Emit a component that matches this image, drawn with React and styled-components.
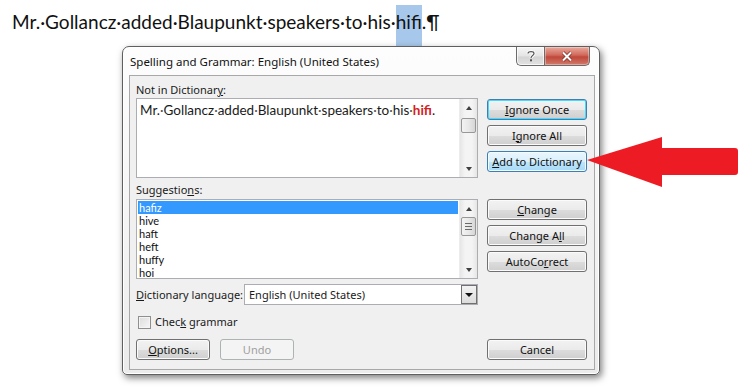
import styled, { createGlobalStyle, css } from "styled-components";

const Global = createGlobalStyle`
  body {
    margin: 0;
    background: #ffffff;
  }
`;

const uiFont = `"Noto Sans", "Open Sans", sans-serif`;
const docFont = `Lato, "Open Sans", sans-serif`;

const Stage = styled.div`
  position: relative;
  width: 749px;
  height: 389px;
  overflow: hidden;
  background: #ffffff;
`;

const DocLine = styled.div`
  height: 46px;
  padding-left: 12px;
  font-family: ${docFont};
  font-size: 19px;
  line-height: 44px;
  color: #111;
  white-space: nowrap;
`;

const Sel = styled.span`
  display: inline-block;
  vertical-align: top;
  margin-top: 5px;
  height: 41px;
  line-height: 34px;
  background: #a7c8ea;
`;

const Window = styled.div`
  position: relative;
  z-index: 1;
  margin-left: 122px;
  width: 478px;
  height: 329px;
  box-sizing: border-box;
  border: 1px solid #5f5f5f;
  border-radius: 7px 7px 5px 5px;
  background: linear-gradient(#fdfdfd, #f3f3f3 60%, #ebebeb);
  box-shadow: 2px 3px 7px rgba(0, 0, 0, 0.5), inset 0 0 0 1px #ffffff;
  padding: 0 4px 4px 6px;
  display: flex;
  flex-direction: column;
  font-family: ${uiFont};
  font-size: 11px;
  color: #1a1a1a;
`;

const TitleBar = styled.div`
  height: 29px;
  display: flex;
  align-items: flex-start;
  justify-content: space-between;
`;

const Title = styled.div`
  padding: 7px 0 0 1px;
  font-size: 11.5px;
  line-height: 15px;
  color: #111;
`;

const Caption = styled.div`
  display: flex;
  margin-right: 5px;
`;

const CapBtn = styled.div`
  height: 19px;
  box-sizing: border-box;
  border: 1px solid #6b6b6b;
  border-top: none;
  display: flex;
  align-items: center;
  justify-content: center;
  ${(p) =>
    p.$close
      ? css`
          width: 46px;
          border-radius: 0 0 5px 0;
          background: linear-gradient(#e9a99b, #d06a5c 45%, #c0473a 55%, #d27c6b);
          box-shadow: inset 0 0 0 1px rgba(255, 255, 255, 0.35);
        `
      : css`
          width: 28px;
          border-right: none;
          border-radius: 0 0 0 5px;
          background: linear-gradient(#f6f6f6, #e4e4e4 50%, #d4d4d4 55%, #e2e2e2);
          box-shadow: inset 0 0 0 1px rgba(255, 255, 255, 0.7);
        `}
`;

const Panel = styled.div`
  flex: 1;
  border: 1px solid #a8a8a8;
  background: #f0f0f0;
  padding: 6px 7px 9px 6px;
  display: grid;
  grid-template-columns: 342px 100px;
  column-gap: 9px;
  align-items: start;
`;

const Label = styled.div`
  grid-column: 1;
  line-height: 16px;
  margin-top: ${(p) => p.$top || 0}px;
  margin-bottom: ${(p) => p.$bottom || 0}px;
`;

const Stack = styled.div`
  grid-column: 2;
  display: flex;
  flex-direction: column;
  gap: 5px;
  margin-top: ${(p) => p.$top || 0}px;
`;

const Button = styled.div`
  height: 21px;
  box-sizing: border-box;
  border: 1px solid #707070;
  border-radius: 3px;
  display: flex;
  align-items: center;
  justify-content: center;
  line-height: 14px;
  color: #111;
  background: linear-gradient(#f2f2f2, #ebebeb 50%, #dddddd 51%, #cfcfcf);
  box-shadow: inset 0 0 0 1px #fbfbfb;
  width: ${(p) => (p.$w ? `${p.$w}px` : "auto")};
  ${(p) =>
    p.$blue &&
    css`
      border-color: #3c7fb1;
      background: linear-gradient(#eaf6fd, #d9f0fc 50%, #bee6fd 51%, #a7d9f5);
      box-shadow: inset 0 0 0 1px #f2fbff;
    `}
  ${(p) =>
    p.$focus &&
    css`
      border-color: #3c7fb1;
      background: linear-gradient(#f2f2f2, #ebebeb 50%, #dddddd 51%, #cfcfcf);
      box-shadow: inset 0 0 0 1px #48d8fb;
    `}
  ${(p) =>
    p.$disabled &&
    css`
      border-color: #adb2b5;
      background: #f4f4f4;
      box-shadow: none;
      color: #a0a0a0;
    `}
`;

const Box = styled.div`
  grid-column: 1;
  height: 80px;
  box-sizing: border-box;
  border: 1px solid #abadb3;
  background: #ffffff;
  display: flex;
`;

const BoxBody = styled.div`
  flex: 1;
  padding: ${(p) => (p.$list ? "1px 1px 0" : "3px 3px")};
  overflow: hidden;
`;

const Sentence = styled.div`
  font-family: ${docFont};
  font-size: 13.5px;
  line-height: 16px;
  white-space: nowrap;
  color: #1a1a1a;
`;

const Dot = styled.span`
  color: #555;
`;

const Bad = styled.b`
  color: #d42020;
  font-weight: 700;
`;

const Row = styled.div`
  height: 13px;
  line-height: 13px;
  font-family: ${docFont};
  font-size: 11px;
  padding-left: 1px;
  color: ${(p) => (p.$sel ? "#ffffff" : "#111")};
  background: ${(p) => (p.$sel ? "#3399ff" : "transparent")};
`;

const Scroll = styled.div`
  width: 17px;
  display: flex;
  flex-direction: column;
  align-items: center;
  background: linear-gradient(90deg, #e6e6e6, #f4f4f4 30%, #f4f4f4 70%, #e6e6e6);
  border-left: 1px solid #ececec;
`;

const ArrowCell = styled.div`
  height: 17px;
  width: 100%;
  display: flex;
  align-items: center;
  justify-content: center;
  &::after {
    content: "";
    border-left: 3.5px solid transparent;
    border-right: 3.5px solid transparent;
    ${(p) =>
      p.$down
        ? "border-top: 4px solid #404040;"
        : "border-bottom: 4px solid #404040;"}
  }
`;

const Thumb = styled.div`
  width: 15px;
  height: ${(p) => p.$h}px;
  margin-top: ${(p) => p.$top}px;
  box-sizing: border-box;
  border: 1px solid #979797;
  border-radius: 2px;
  background: linear-gradient(90deg, #f3f3f3, #e8e8e8 50%, #d6d6d6);
  display: flex;
  flex-direction: column;
  align-items: center;
  justify-content: center;
  gap: 2px;
`;

const Grip = styled.div`
  width: 7px;
  height: 1px;
  background: #6a6a6a;
`;

const Spacer = styled.div`
  flex: 1;
`;

const LangRow = styled.div`
  grid-column: 1;
  margin-top: 5px;
  display: flex;
  align-items: center;
`;

const LangLabel = styled.div`
  width: 108px;
  line-height: 16px;
`;

const Combo = styled.div`
  flex: 1;
  height: 21px;
  box-sizing: border-box;
  border: 1px solid #abadb3;
  background: #ffffff;
  display: flex;
  align-items: stretch;
`;

const ComboText = styled.div`
  flex: 1;
  padding-left: 4px;
  line-height: 19px;
`;

const DropBtn = styled.div`
  width: 16px;
  box-sizing: border-box;
  border: 1px solid #707070;
  background: linear-gradient(#f2f2f2, #dcdcdc);
  display: flex;
  align-items: center;
  justify-content: center;
  &::after {
    content: "";
    border-left: 4px solid transparent;
    border-right: 4px solid transparent;
    border-top: 4px solid #111;
  }
`;

const CheckRow = styled.div`
  grid-column: 1;
  margin-top: 9px;
  display: flex;
  align-items: center;
  gap: 4px;
  padding-left: 2px;
  line-height: 16px;
`;

const Check = styled.div`
  width: 13px;
  height: 13px;
  box-sizing: border-box;
  border: 1px solid #8e8f8f;
  background: linear-gradient(135deg, #dcdcdc, #f6f6f6);
  box-shadow: inset 0 0 0 1px #f4f4f4;
`;

const Bottom = styled.div`
  grid-column: ${(p) => p.$col};
  margin-top: 9px;
  display: flex;
  gap: 10px;
`;

const Arrow = styled.svg`
  position: absolute;
  left: 586px;
  top: 135px;
  z-index: 2;
`;

const D = () => <Dot>·</Dot>;

const TextScroll = ({ grip, top, h }) => (
  <Scroll>
    <ArrowCell />
    <Thumb $top={top} $h={h}>
      {grip && (
        <>
          <Grip />
          <Grip />
          <Grip />
        </>
      )}
    </Thumb>
    <Spacer />
    <ArrowCell $down />
  </Scroll>
);

const suggestions = ["hafiz", "hive", "haft", "heft", "huffy", "hoi"];

export default function App() {
  return (
    <Stage>
      <Global />
      <DocLine>
        Mr.·Gollancz·added·Blaupunkt·speakers·to·his·<Sel>hifi</Sel>.¶
      </DocLine>

      <Window>
        <TitleBar>
          <Title>Spelling and Grammar: English (United States)</Title>
          <Caption>
            <CapBtn>
              <svg width="10" height="12" viewBox="0 0 10 12">
                <path
                  d="M2 3.5 C2 1 8 1 8 3.5 C8 5.5 5 5.5 5 8"
                  fill="none"
                  stroke="#fff"
                  strokeWidth="3"
                />
                <path
                  d="M2 3.5 C2 1 8 1 8 3.5 C8 5.5 5 5.5 5 8"
                  fill="none"
                  stroke="#555"
                  strokeWidth="1.2"
                />
                <rect x="4" y="9.3" width="2" height="2" fill="#555" />
              </svg>
            </CapBtn>
            <CapBtn $close>
              <svg width="12" height="11" viewBox="0 0 12 11">
                <path d="M2 1.5 L10 9.5 M10 1.5 L2 9.5" stroke="#7a2a22" strokeWidth="3.4" />
                <path d="M2 1.5 L10 9.5 M10 1.5 L2 9.5" stroke="#ffffff" strokeWidth="2" />
              </svg>
            </CapBtn>
          </Caption>
        </TitleBar>

        <Panel>
          <Label>
            Not in Dictionar<u>y</u>:
          </Label>
          <Box>
            <BoxBody>
              <Sentence>
                Mr.<D />Gollancz<D />added<D />Blaupunkt<D />speakers<D />to<D />his<D />
                <Bad>hifi</Bad>.
              </Sentence>
            </BoxBody>
            <TextScroll top={2} h={15} />
          </Box>
          <Stack $top={1}>
            <Button $focus>
              <span>
                <u>I</u>gnore Once
              </span>
            </Button>
            <Button>
              <span>
                I<u>g</u>nore All
              </span>
            </Button>
            <Button $blue>
              <span>
                <u>A</u>dd to Dictionary
              </span>
            </Button>
          </Stack>

          <Label $top={4} $bottom={1}>
            Suggestio<u>n</u>s:
          </Label>
          <Box>
            <BoxBody $list>
              {suggestions.map((s, i) => (
                <Row key={s} $sel={i === 0}>
                  {s}
                </Row>
              ))}
            </BoxBody>
            <TextScroll grip top={0} h={19} />
          </Box>
          <Stack>
            <Button>
              <span>
                <u>C</u>hange
              </span>
            </Button>
            <Button>
              <span>
                Change A<u>l</u>l
              </span>
            </Button>
            <Button>
              <span>
                AutoCo<u>r</u>rect
              </span>
            </Button>
          </Stack>

          <LangRow>
            <LangLabel>
              <u>D</u>ictionary language:
            </LangLabel>
            <Combo>
              <ComboText>English (United States)</ComboText>
              <DropBtn />
            </Combo>
          </LangRow>

          <CheckRow>
            <Check />
            <span>
              Chec<u>k</u> grammar
            </span>
          </CheckRow>

          <Bottom $col={1}>
            <Button $w={74}>
              <span>
                <u>O</u>ptions...
              </span>
            </Button>
            <Button $w={74} $disabled>
              Undo
            </Button>
          </Bottom>
          <Bottom $col={2}>
            <Button $w={100}>Cancel</Button>
          </Bottom>
        </Panel>
      </Window>

      <Arrow width="156" height="56" viewBox="0 0 156 56">
        <path
          d="M1 25 L76 2 L76 13 L149 13 Q152 13 152 16 L152 37 Q152 40 149 40 L76 40 L76 52 Z"
          fill="#ed1c24"
        />
      </Arrow>
    </Stage>
  );
}
